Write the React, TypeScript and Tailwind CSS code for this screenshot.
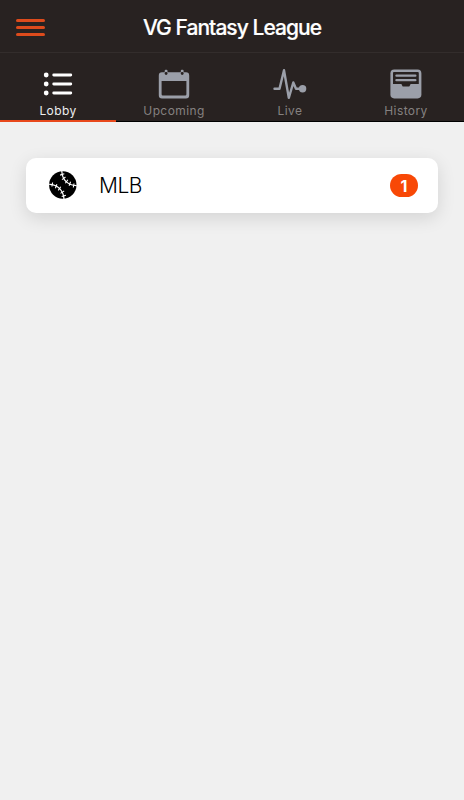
import { useState } from "react";

type Tab = "Lobby" | "Upcoming" | "Live" | "History";

// Icons share a 34x32 box and pick up the tab's text colour.
function LobbyIcon() {
  return (
    <svg className="h-8 w-[34px]" viewBox="0 0 34 32" fill="none" stroke="currentColor" strokeLinecap="round">
      <g fill="currentColor" stroke="none">
        <circle cx="5.2" cy="7" r="2.4" />
        <circle cx="5.2" cy="16" r="2.4" />
        <circle cx="5.2" cy="25" r="2.4" />
      </g>
      <path strokeWidth={2.8} d="M12.7 7h17.1M12.7 16h17.1M12.7 25h17.1" />
    </svg>
  );
}

function UpcomingIcon() {
  return (
    <svg className="h-8 w-[34px]" viewBox="0 0 34 32" fill="currentColor">
      <path
        fillRule="evenodd"
        d="M5 4.3h24a3.2 3.2 0 0 1 3.2 3.2v19.7a3.2 3.2 0 0 1-3.2 3.2H5a3.2 3.2 0 0 1-3.2-3.2V7.5A3.2 3.2 0 0 1 5 4.3zM4.6 12.9v13.3a1.2 1.2 0 0 0 1.2 1.2h22.4a1.2 1.2 0 0 0 1.2-1.2V12.9z"
      />
      <path d="M7.7 4.5V2.7a1 1 0 0 1 1-1h.8a1 1 0 0 1 1 1v1.8zM23.8 4.5V2.7a1 1 0 0 1 1-1h.8a1 1 0 0 1 1 1v1.8z" />
      <circle cx="9.1" cy="5.5" r="1.4" fill="#282221" />
      <circle cx="25.2" cy="5.5" r="1.4" fill="#282221" />
    </svg>
  );
}

function LiveIcon() {
  return (
    <svg className="h-8 w-[34px]" viewBox="0 0 34 32" fill="none" stroke="currentColor">
      <path
        strokeWidth={2.4}
        strokeLinecap="round"
        strokeLinejoin="round"
        d="M1.5 20.8h5L11 2.2l4.8 27.7 4.5-15.4 2.7 6.3h6"
      />
      <circle cx="29.6" cy="20.7" r="3.7" fill="currentColor" stroke="none" />
    </svg>
  );
}

function HistoryIcon() {
  return (
    <svg className="h-8 w-[34px]" viewBox="0 0 34 32">
      <rect x="1.4" y="1.6" width="31" height="28.8" rx="3.8" fill="currentColor" />
      <path
        fill="#282221"
        d="M4 5a.9.9 0 0 1 .9-.9h24a.9.9 0 0 1 .9.9v11h-8.2l-1 1.9a1 1 0 0 1-.9.6h-5.4a1 1 0 0 1-.9-.6l-1-1.9H4z"
      />
      <path fill="none" stroke="currentColor" strokeWidth={2.2} strokeLinecap="round" d="M7.4 7.7h19M7.4 12.2h19" />
    </svg>
  );
}

function BaseballIcon() {
  return (
    <svg className="-mt-px h-7 w-7" viewBox="0 0 28 28" fill="none" stroke="white">
      <circle cx="13.8" cy="14" r="13.7" fill="black" stroke="none" />
      <path strokeWidth={1.2} d="M12.8 0c.3 8.5 5.6 14.4 14.9 14.7M.2 13.4C8.8 13.7 14.5 19.5 15 28" />
      <path
        strokeWidth={1.1}
        d="M11.1 4.1l4.2-1.3M13 8.6l3.5-2.6M16.4 12.3l2.4-3.6M20.1 14.7l1.5-3.9M24.3 16.5l.7-4M2.9 15.5l.7-4M6.4 17.2l1.5-3.9M9.3 19.4l2.4-3.6M11.5 22.4l3.7-2.5M12.7 25.5l4.2-1.2"
      />
    </svg>
  );
}

const TABS: { name: Tab; icon: () => React.JSX.Element }[] = [
  { name: "Lobby", icon: LobbyIcon },
  { name: "Upcoming", icon: UpcomingIcon },
  { name: "Live", icon: LiveIcon },
  { name: "History", icon: HistoryIcon },
];

export default function App() {
  const [active, setActive] = useState<Tab>("Lobby");

  return (
    <div className="min-h-screen bg-[#f0f0f0] font-['Inter',sans-serif]">
      {/* Header */}
      <header className="grid h-[53px] grid-cols-[60px_1fr_60px] items-center border-b border-[#332d2c] bg-[#282221]">
        <button aria-label="Menu" className="ml-4 mt-[3px] flex w-[29px] flex-col gap-[4.5px]">
          <span className="h-[2.8px] rounded-full bg-[#dd4b1c]" />
          <span className="h-[2.8px] rounded-full bg-[#dd4b1c]" />
          <span className="h-[2.8px] rounded-full bg-[#dd4b1c]" />
        </button>
        <h1 className="mt-[3px] whitespace-nowrap text-center text-[21px] font-medium leading-7 tracking-[-0.95px] text-white [-webkit-text-stroke:0.2px_white]">
          VG Fantasy League
        </h1>
      </header>

      {/* Tabs */}
      <nav className="grid h-[69px] grid-cols-4 border-b border-black bg-[#282221]">
        {TABS.map(({ name, icon: Icon }) => (
          <button
            key={name}
            onClick={() => setActive(name)}
            className={`-mb-px flex flex-col items-center border-b-2 pt-[15px] ${
              active === name ? "border-[#e8481b] text-white" : "border-transparent text-[#9b9fa9]"
            }`}
          >
            <Icon />
            <span
              className={`mt-[3px] text-xs leading-4 tracking-[0.4px] ${
                active === name ? "text-[#eeeeee]" : "text-[#858180]"
              }`}
            >
              {name}
            </span>
          </button>
        ))}
      </nav>

      {/* Leagues */}
      <main className="px-[26px] pt-9">
        <button className="flex h-[55px] w-full items-center rounded-[10px] bg-white pl-[23px] pr-5 shadow-[0_5px_18px_rgba(0,0,0,0.12)]">
          <BaseballIcon />
          <span className="ml-[22px] text-[21px] font-light leading-7 tracking-[-0.5px] text-black">MLB</span>
          <span className="ml-auto flex h-[23px] w-[28px] items-center justify-center rounded-full bg-[#f84806] text-base font-bold text-white">
            1
          </span>
        </button>
      </main>
    </div>
  );
}
